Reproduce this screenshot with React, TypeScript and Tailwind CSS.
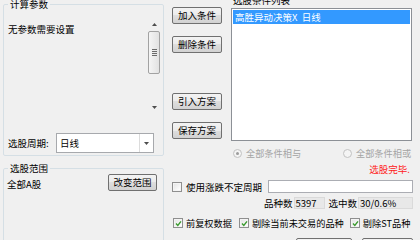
function Btn({ children, className = "" }: { children?: React.ReactNode; className?: string }) {
  return (
    <div
      className={`h-[17px] border border-[#707070] rounded-[2px] bg-[linear-gradient(#f3f3f3,#ebebeb_50%,#dedede_50%,#d2d2d2)] flex items-center justify-center text-[9.5px] leading-none text-black ${className}`}
    >
      {children}
    </div>
  );
}

function Check({ checked = false }: { checked?: boolean }) {
  return (
    <span className="w-[10px] h-[10px] shrink-0 border border-[#8f8f8f] bg-[#f4f4f4] p-[1px] flex">
      <span className="flex-1 bg-[linear-gradient(135deg,#e6e6e6,#ffffff)] flex items-center justify-center">
        {checked && (
          <svg width="7" height="7" viewBox="0 0 7 7">
            <path d="M1 3.6 L2.8 5.4 L6 1.4" fill="none" stroke="#3a9a2e" strokeWidth="1.4" />
          </svg>
        )}
      </span>
    </span>
  );
}

function Radio({ checked = false }: { checked?: boolean }) {
  return (
    <span className="w-[9px] h-[9px] shrink-0 rounded-full border border-[#c2c2c2] bg-[#f4f4f4] flex items-center justify-center">
      {checked && <span className="w-[3px] h-[3px] rounded-full bg-[#9c9c9c]" />}
    </span>
  );
}

function Arrow({ down = false }: { down?: boolean }) {
  return (
    <svg width="5" height="3" viewBox="0 0 5 3">
      <path d={down ? "M0 0 H5 L2.5 3 Z" : "M0 3 H5 L2.5 0 Z"} fill="#4d4d4d" />
    </svg>
  );
}

export default function App() {
  return (
    <div className="w-[420px] h-[240px] overflow-hidden whitespace-nowrap bg-[#f0f0f0] text-black text-[9.5px] leading-[12px] font-['Microsoft_YaHei','Noto_Sans_CJK_SC',sans-serif] flex">
      {/* 左侧 */}
      <div className="w-[164px] pl-[3px] shrink-0">
        <fieldset className="mt-[-2px] w-[161px] h-[158px] border border-[#d5dfe5] rounded-[2px]">
          <legend className="ml-[4px] px-[2px] leading-[12px]">计算参数</legend>
          <div className="mt-[7px] h-[96px] flex pl-[4px] pr-[3px]">
            <div className="pt-[6px]">无参数需要设置</div>
            <div className="ml-auto w-[12px] mt-[1px] flex flex-col items-center">
              <div className="h-[12px] flex items-center justify-center">
                <Arrow />
              </div>
              <div className="mt-[1px] h-[43px] w-[12px] border border-[#a2a2a2] rounded-[2px] bg-[linear-gradient(to_right,#f5f5f5,#e2e2e2)] flex flex-col items-center justify-center gap-[1px]">
                <span className="w-[5px] h-px bg-[#6a6a6a]" />
                <span className="w-[5px] h-px bg-[#6a6a6a]" />
                <span className="w-[5px] h-px bg-[#6a6a6a]" />
                <span className="w-[5px] h-px bg-[#6a6a6a]" />
              </div>
              <div className="mt-auto h-[12px] flex items-center justify-center">
                <Arrow down />
              </div>
            </div>
          </div>
          <div className="mt-[20px] flex items-center pl-[4px]">
            <span className="w-[48px]">选股周期:</span>
            <div className="w-[98px] h-[20px] border border-[#a7a9ad] bg-white flex items-center">
              <span className="pl-[3px] flex-1">日线</span>
              <span className="w-[14px] h-full border-l border-[#dcdcdc] flex items-center justify-center">
                <Arrow down />
              </span>
            </div>
          </div>
        </fieldset>

        <fieldset className="mt-[6px] w-[161px] h-[100px] border border-[#d5dfe5] rounded-[2px]">
          <legend className="ml-[4px] px-[2px] leading-[12px]">选股范围</legend>
          <div className="flex items-center justify-between pl-[3px] pr-[6px]">
            <span className="pt-[3px]">全部A股</span>
            <Btn className="w-[49px]">改变范围</Btn>
          </div>
        </fieldset>
      </div>

      {/* 右侧 */}
      <div className="flex-1 min-w-0 flex flex-col pl-[8px] pr-[7px]">
        <div className="flex">
          <div className="w-[50px] mt-[7px] flex flex-col">
            <Btn>加入条件</Btn>
            <Btn className="mt-[12px]">删除条件</Btn>
            <Btn className="mt-[40px]">引入方案</Btn>
            <Btn className="mt-[12px]">保存方案</Btn>
          </div>
          <div className="ml-[9px] w-[181px] mt-[-6px]">
            <div className="h-[12px] pl-[2px]">选股条件列表</div>
            <div className="mt-[2px] h-[133px] border border-[#8c9096] bg-white p-px">
              <div className="h-[14px] bg-[#3399ff] text-white pl-[2px] flex items-center whitespace-pre">
                高胜异动决策X  日线
              </div>
            </div>
          </div>
        </div>

        <div className="mt-[6px] h-[12px] pl-[61px] flex items-center text-[#a4a4a4] text-[9.2px]">
          <div className="w-[110px] shrink-0 flex items-center gap-[4px]">
            <Radio checked />
            <span>全部条件相与</span>
          </div>
          <div className="shrink-0 flex items-center gap-[4px]">
            <Radio />
            <span>全部条件相或</span>
          </div>
        </div>

        <div className="mt-[4px] h-[12px] flex justify-end pr-[3px] text-[#ff1a1a]">选股完毕.</div>

        <div className="mt-[5px] h-[13px] flex items-center">
          <Check />
          <span className="ml-[4px]">使用涨跌不定周期</span>
          <div className="ml-[6px] flex-1 h-[13px] border border-[#abadb3] bg-white" />
        </div>

        <div className="mt-[4px] h-[12px] flex items-center pl-[92px]">
          <span>品种数</span>
          <span className="ml-[1px] w-[31px] h-[12px] bg-[#e8e8e8] border border-[#dadada] pl-[1px] flex items-center">5397</span>
          <span className="ml-[4px]">选中数</span>
          <span className="ml-[1px] flex-1 h-[12px] bg-[#e8e8e8] border border-[#dadada] pl-[1px] flex items-center">30/0.6%</span>
        </div>

        <div className="mt-[8px] h-[12px] flex items-center pl-[1px] text-[9.2px]">
          <Check checked />
          <span className="ml-[3px] shrink-0">前复权数据</span>
          <span className="ml-[7px] shrink-0"><Check checked /></span>
          <span className="ml-[3px] shrink-0">剔除当前未交易的品种</span>
          <span className="ml-[6px] shrink-0"><Check checked /></span>
          <span className="ml-[3px] shrink-0">剔除ST品种</span>
        </div>

        <div className="mt-[9px] flex justify-end gap-[10px]">
          <Btn className="w-[56px]" />
          <Btn className="w-[51px]" />
        </div>
      </div>
    </div>
  );
}
